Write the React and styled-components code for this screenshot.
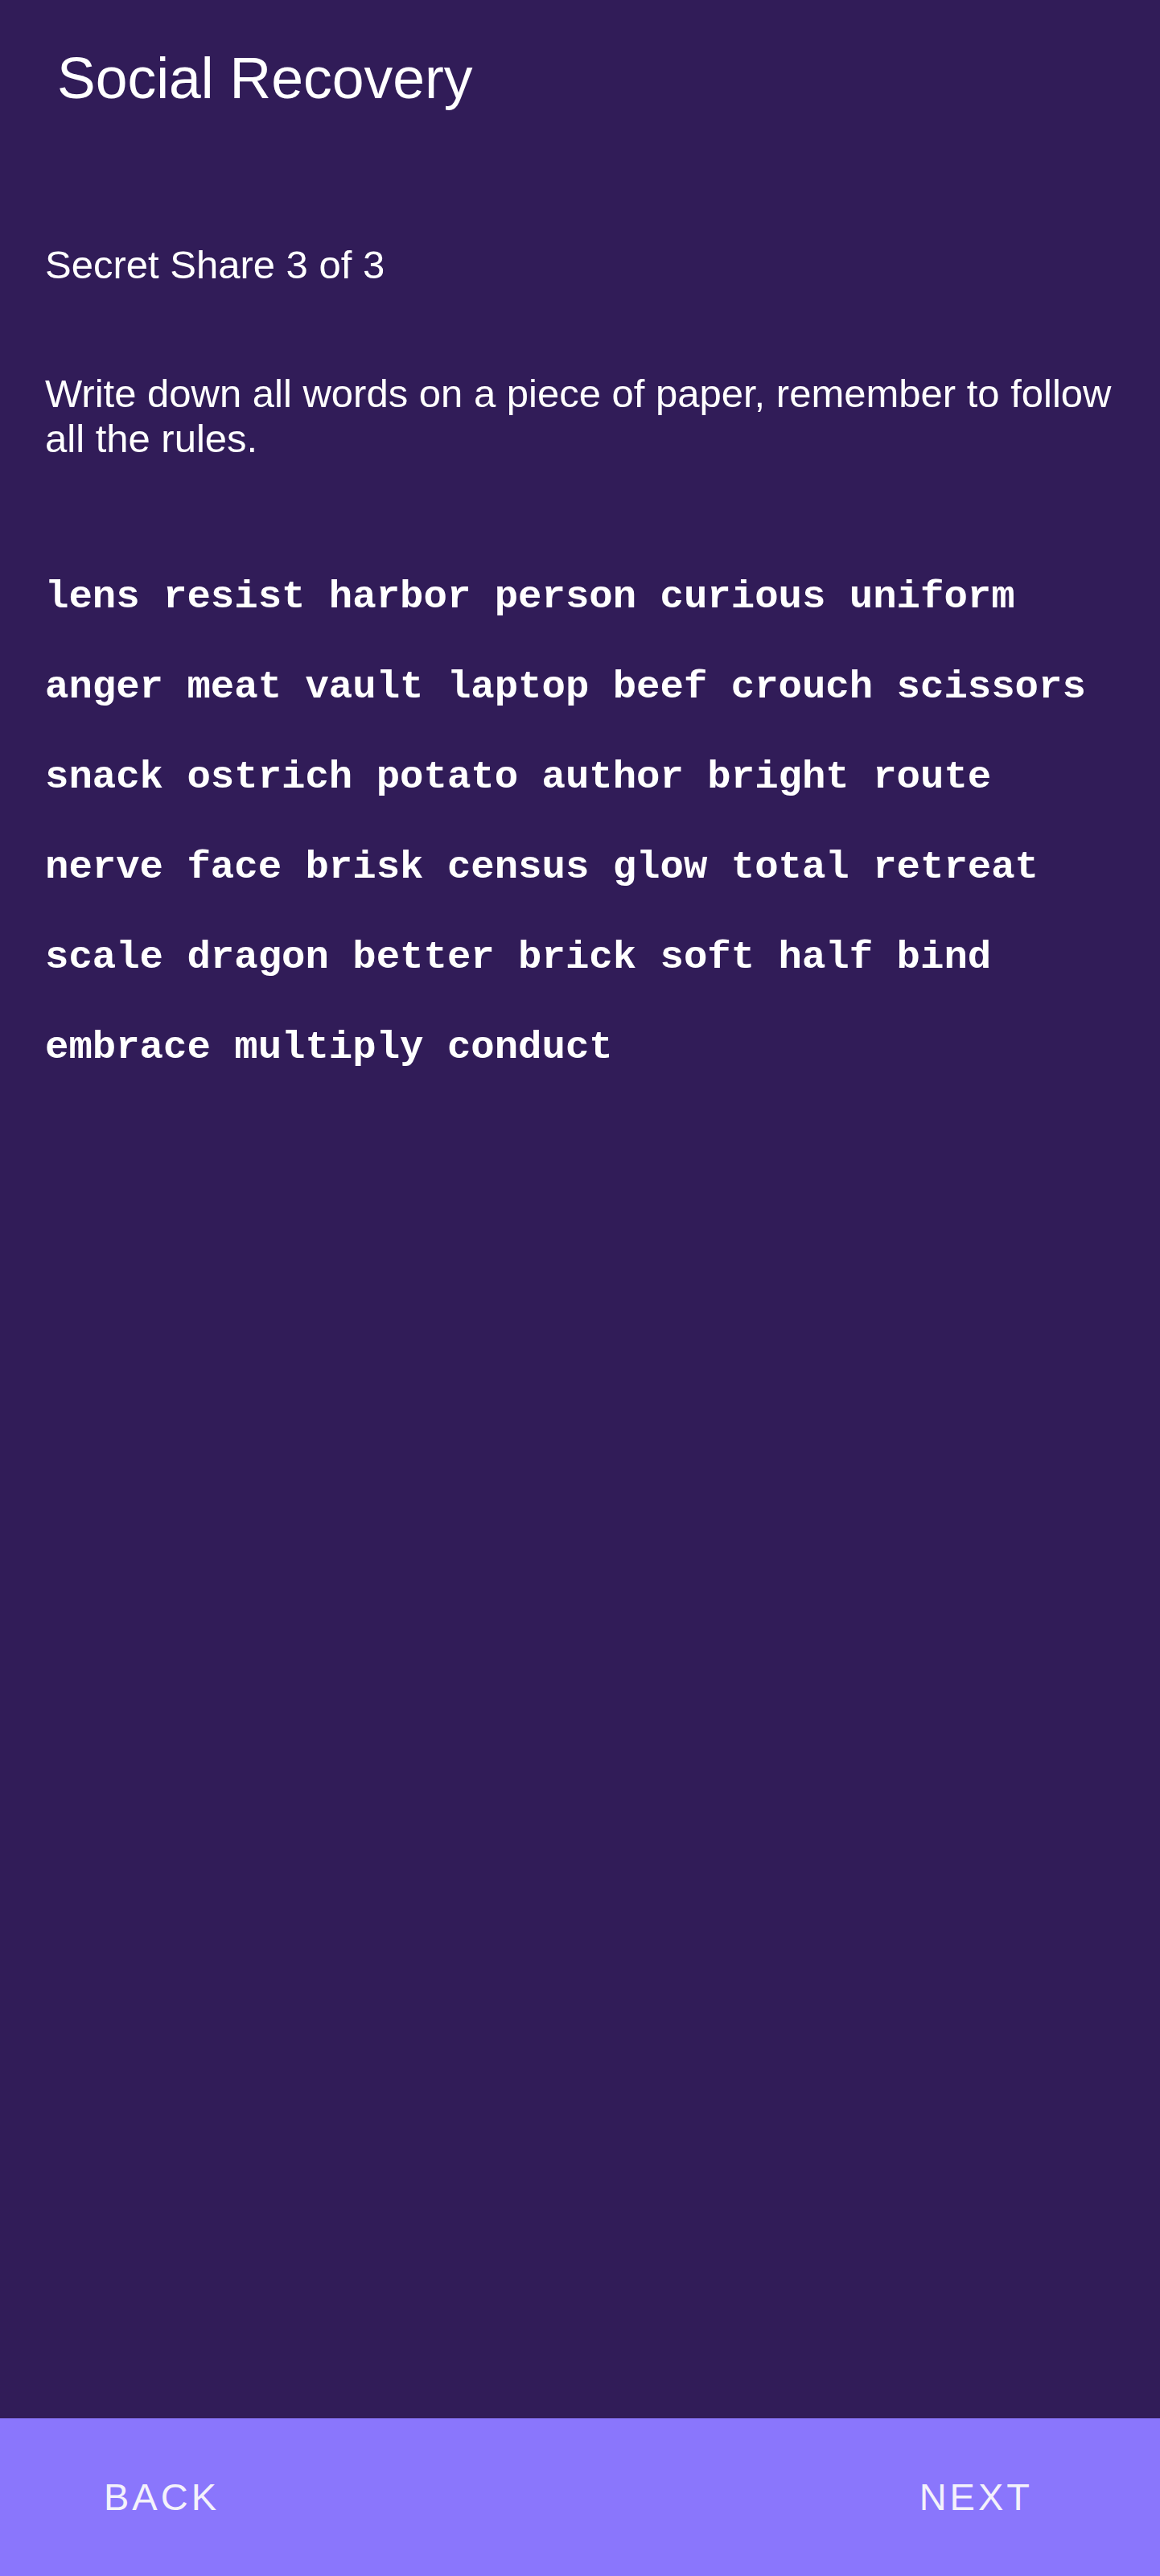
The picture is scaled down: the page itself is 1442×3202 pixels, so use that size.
import styled, { createGlobalStyle } from 'styled-components';

const words = [
  'lens', 'resist', 'harbor', 'person', 'curious', 'uniform',
  'anger', 'meat', 'vault', 'laptop', 'beef', 'crouch', 'scissors',
  'snack', 'ostrich', 'potato', 'author', 'bright', 'route',
  'nerve', 'face', 'brisk', 'census', 'glow', 'total', 'retreat',
  'scale', 'dragon', 'better', 'brick', 'soft', 'half', 'bind',
  'embrace', 'multiply', 'conduct',
];

const SocialRecovery = () => {
  return (
    <StyledScreen>
      <GlobalStyle />
      <StyledHeader>
        <StyledTitle>Social Recovery</StyledTitle>
      </StyledHeader>
      <StyledContent>
        <StyledShareLabel>Secret Share 3 of 3</StyledShareLabel>
        <StyledHint>
          Write down all words on a piece of paper, remember to follow all the rules.
        </StyledHint>
        <StyledWords>{words.join(' ')}</StyledWords>
      </StyledContent>
      <StyledFooter>
        <StyledNavButton>Back</StyledNavButton>
        <StyledNavButton>Next</StyledNavButton>
      </StyledFooter>
    </StyledScreen>
  );
};

const GlobalStyle = createGlobalStyle`
  html, body {
    margin: 0;
    padding: 0;
    background-color: #311c58;
  }
  * {
    box-sizing: border-box;
  }
`;

const StyledScreen = styled.div`
  min-height: 100vh;
  display: flex;
  flex-direction: column;
  background-color: #311c58;
  color: #ffffff;
  font-family: 'Liberation Sans', Arial, sans-serif;
`;

const StyledHeader = styled.header`
  padding: 56px 0 0 71px;
`;

const StyledTitle = styled.h1`
  margin: 0;
  font-size: 71.5px;
  font-weight: 400;
  line-height: 83px;
`;

const StyledContent = styled.main`
  flex: 1;
  padding: 162px 56px 0 56px;
  display: flex;
  flex-direction: column;
`;

const StyledShareLabel = styled.p`
  margin: 0;
  font-size: 49px;
  line-height: 56px;
`;

const StyledHint = styled.p`
  margin: 105px 0 0;
  font-size: 49px;
  line-height: 55.5px;
`;

const StyledWords = styled.p`
  margin: 113px 0 0;
  font-family: 'Liberation Mono', 'Courier New', monospace;
  font-weight: 700;
  font-size: 49px;
  line-height: 112px;
`;

const StyledFooter = styled.footer`
  height: 196px;
  background-color: #8a76fc;
  display: flex;
  align-items: center;
  justify-content: space-between;
  padding: 0 158px 0 129px;
`;

const StyledNavButton = styled.button`
  background: none;
  border: none;
  padding: 0;
  color: #f4f2fb;
  font-family: 'Liberation Sans', Arial, sans-serif;
  font-size: 47px;
  letter-spacing: 4px;
  text-transform: uppercase;
  line-height: 54px;
  cursor: pointer;
`;

export default SocialRecovery;
